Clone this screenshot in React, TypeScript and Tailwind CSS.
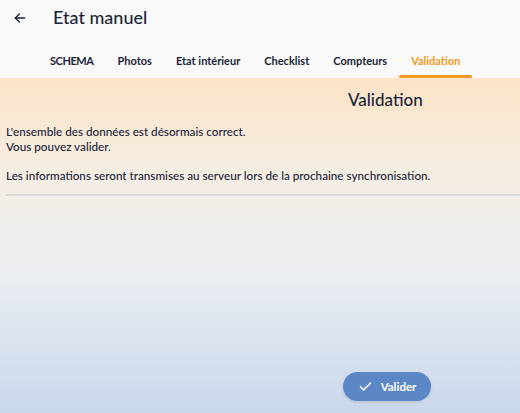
import React from "react";

const tabs = ["SCHEMA", "Photos", "Etat intérieur", "Checklist", "Compteurs", "Validation"];

export default function App() {
  return (
    <div
      className="w-[520px] h-[413px] flex flex-col overflow-hidden text-[#1b2538]"
      style={{ fontFamily: "Lato, 'Noto Sans', sans-serif" }}
    >
      <div className="bg-[#f9f9f9] h-[78px] flex flex-col shrink-0">
        <div className="flex items-center h-[35px] pl-[13px]">
          <svg width="14" height="14" viewBox="0 0 24 24" fill="none" stroke="#1b2538" strokeWidth="2.5" strokeLinecap="round" strokeLinejoin="round">
            <path d="M20 12H4" />
            <path d="M11 5l-7 7 7 7" />
          </svg>
          <span className="ml-[26px] text-[18px] font-medium">Etat manuel</span>
        </div>
        <div className="flex pl-[38px] mt-[12px] h-[31px]">
          {tabs.map((t) => {
            const active = t === "Validation";
            const upper = t === "SCHEMA";
            return (
              <div
                key={t}
                className={`relative px-3 font-bold pt-[6px] text-[11px] ${upper ? "tracking-[-0.45px]" : ""} ${active ? "text-[#f59a23]" : "text-[#1b2538]"}`}
              >
                {t}
                {active && (
                  <div className="absolute left-0 right-0 bottom-0 h-[3px] rounded-full bg-[#f59a23]" />
                )}
              </div>
            );
          })}
        </div>
      </div>
      <div className="flex-1 flex flex-col bg-[linear-gradient(to_bottom,#fbe4c7_0%,#f5eee5_30%,#eef0f2_55%,#c9d7eb_100%)]">
        <div className="pl-[348px] pt-[11px] text-[17px] font-medium leading-[22px]">Validation</div>
        <div className="pl-[6px] mt-[13px] text-[11.7px] font-medium leading-[14.5px]">
          <p>L'ensemble des données est désormais correct.</p>
          <p>Vous pouvez valider.</p>
          <p className="mt-[15px]">Les informations seront transmises au serveur lors de la prochaine synchronisation.</p>
        </div>
        <div className="ml-[6px] mt-[11px] h-[2px] bg-[#d8d8da]" />
        <div className="flex-1" />
        <div className="flex pl-[343px] pb-[12px]">
          <button className="w-[88px] h-[29px] rounded-full bg-[#5b87c6] text-white text-[11.5px] font-bold flex items-center justify-center gap-[8px] shadow-sm">
            <svg width="15" height="15" viewBox="0 0 24 24" fill="none" stroke="white" strokeWidth="2.5" strokeLinecap="round" strokeLinejoin="round">
              <path d="M4 12.5l5 5L20 6.5" />
            </svg>
            Valider
          </button>
        </div>
      </div>
    </div>
  );
}
